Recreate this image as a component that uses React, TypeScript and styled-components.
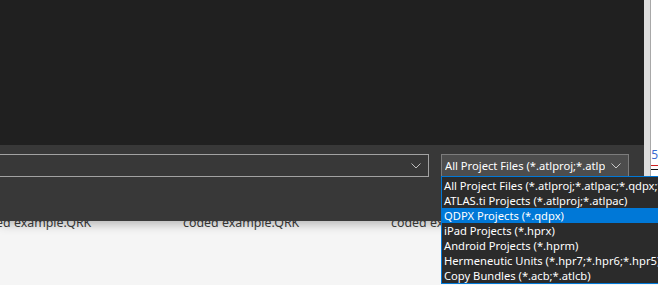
import * as React from 'react';
import styled, { createGlobalStyle } from 'styled-components';

const GlobalStyle = createGlobalStyle`
    html, body {
        margin: 0;
        padding: 0;
        background: #f5f5f5;
        overflow: hidden;
    }
    body {
        font-family: 'Noto Sans', 'Open Sans', sans-serif;
    }
`;

const Screen = styled.div`
    position: relative;
    width: 658px;
    height: 285px;
    overflow: hidden;
    background: #f5f5f5;
    display: flex;
    flex-direction: column;
`;

const TopArea = styled.div`
    display: flex;
    height: 221px;
    position: relative;
    z-index: 2;
`;

const DialogWindow = styled.div`
    width: 646px;
    display: flex;
    flex-direction: column;
    box-shadow: 0 3px 10px rgba(0, 0, 0, 0.28);
`;

const Browser = styled.div`
    height: 145px;
    background: #202020;
`;

const Footer = styled.div`
    flex: 1;
    background: #383838;
    display: flex;
    align-items: flex-start;
    padding-top: 9px;
    gap: 12px;
`;

const Combo = styled.div<{ $width: number; $filled?: boolean }>`
    box-sizing: border-box;
    width: ${({ $width }) => $width}px;
    height: 23px;
    margin-left: ${({ $filled }) => ($filled ? '0' : '-2px')};
    border: 1px solid ${({ $filled }) => ($filled ? '#7c7c7c' : '#a2a2a2')};
    background: ${({ $filled }) => ($filled ? '#4d4d4d' : '#383838')};
    display: flex;
    align-items: center;
    padding: 0 7px 0 3px;
    color: #ffffff;
    font-size: 11.2px;
`;

const ComboText = styled.span`
    flex: 1;
    white-space: nowrap;
    overflow: hidden;
    margin-right: 6px;
`;

const SideStrip = styled.div`
    flex: 1;
    display: flex;
`;

const ScrollTrack = styled.div`
    width: 6px;
    background: #dedede;
    border-right: 1px solid #a8a8a8;
`;

const SidePage = styled.div`
    flex: 1;
    background: #ffffff;
    display: flex;
    flex-direction: column;
    padding-top: 148px;
    overflow: hidden;
`;

const SideGlyph = styled.div`
    height: 14px;
    font-size: 12px;
    line-height: 14px;
    color: #3a6ad0;
    overflow: hidden;
`;

const SideMark = styled.div<{ $color: string }>`
    height: 1px;
    margin-top: 3px;
    background: ${({ $color }) => $color};
`;

const FileRow = styled.div`
    display: flex;
    margin-top: -5px;
    margin-left: -25px;
    position: relative;
    z-index: 1;
    font-family: 'Noto Sans', sans-serif;
    font-size: 12.4px;
    line-height: 14px;
    color: #3c3c3c;
    white-space: nowrap;
`;

const FileLabel = styled.span`
    width: 208px;
    flex: none;
`;

const DropList = styled.div`
    position: absolute;
    left: 441px;
    top: 176px;
    width: 230px;
    height: 108px;
    box-sizing: border-box;
    border: 1px solid #0078d7;
    background: #2b2b2b;
    z-index: 5;
    padding-top: 1px;
`;

const DropItem = styled.div<{ $active?: boolean }>`
    height: 15px;
    line-height: 15px;
    padding-left: 2px;
    font-size: 11.2px;
    color: #ffffff;
    white-space: nowrap;
    background: ${({ $active }) => ($active ? '#0078d7' : 'transparent')};
`;

function Chevron({ color }: { color: string }) {
    return (
        <svg width="10" height="6" viewBox="0 0 10 6">
            <path d="M0.5 0.5 L5 5 L9.5 0.5" fill="none" stroke={color} strokeWidth="1" />
        </svg>
    );
}

const filters = [
    'All Project Files (*.atlproj;*.atlpac;*.qdpx;*.hprx;*.hprm)',
    'ATLAS.ti Projects (*.atlproj;*.atlpac)',
    'QDPX Projects (*.qdpx)',
    'iPad Projects (*.hprx)',
    'Android Projects (*.hprm)',
    'Hermeneutic Units (*.hpr7;*.hpr6;*.hpr5)',
    'Copy Bundles (*.acb;*.atlcb)',
];

export default function App() {
    return (
        <Screen>
            <GlobalStyle />
            <TopArea>
                <DialogWindow>
                    <Browser />
                    <Footer>
                        <Combo $width={431}>
                            <ComboText />
                            <Chevron color="#bdbdbd" />
                        </Combo>
                        <Combo $width={188} $filled>
                            <ComboText>All Project Files (*.atlproj;*.atlpac;*.qdpx)</ComboText>
                            <Chevron color="#c8c8c8" />
                        </Combo>
                    </Footer>
                </DialogWindow>
                <SideStrip>
                    <ScrollTrack />
                    <SidePage>
                        <SideGlyph>5</SideGlyph>
                        <SideMark $color="#d02020" />
                        <SideMark $color="#111111" />
                    </SidePage>
                </SideStrip>
            </TopArea>
            <FileRow>
                <FileLabel>coded example.QRK</FileLabel>
                <FileLabel>coded example.QRK</FileLabel>
                <FileLabel>coded example.QRK</FileLabel>
            </FileRow>
            <DropList>
                {filters.map((f, i) => (
                    <DropItem key={f} $active={i === 2}>
                        {f}
                    </DropItem>
                ))}
            </DropList>
        </Screen>
    );
}
